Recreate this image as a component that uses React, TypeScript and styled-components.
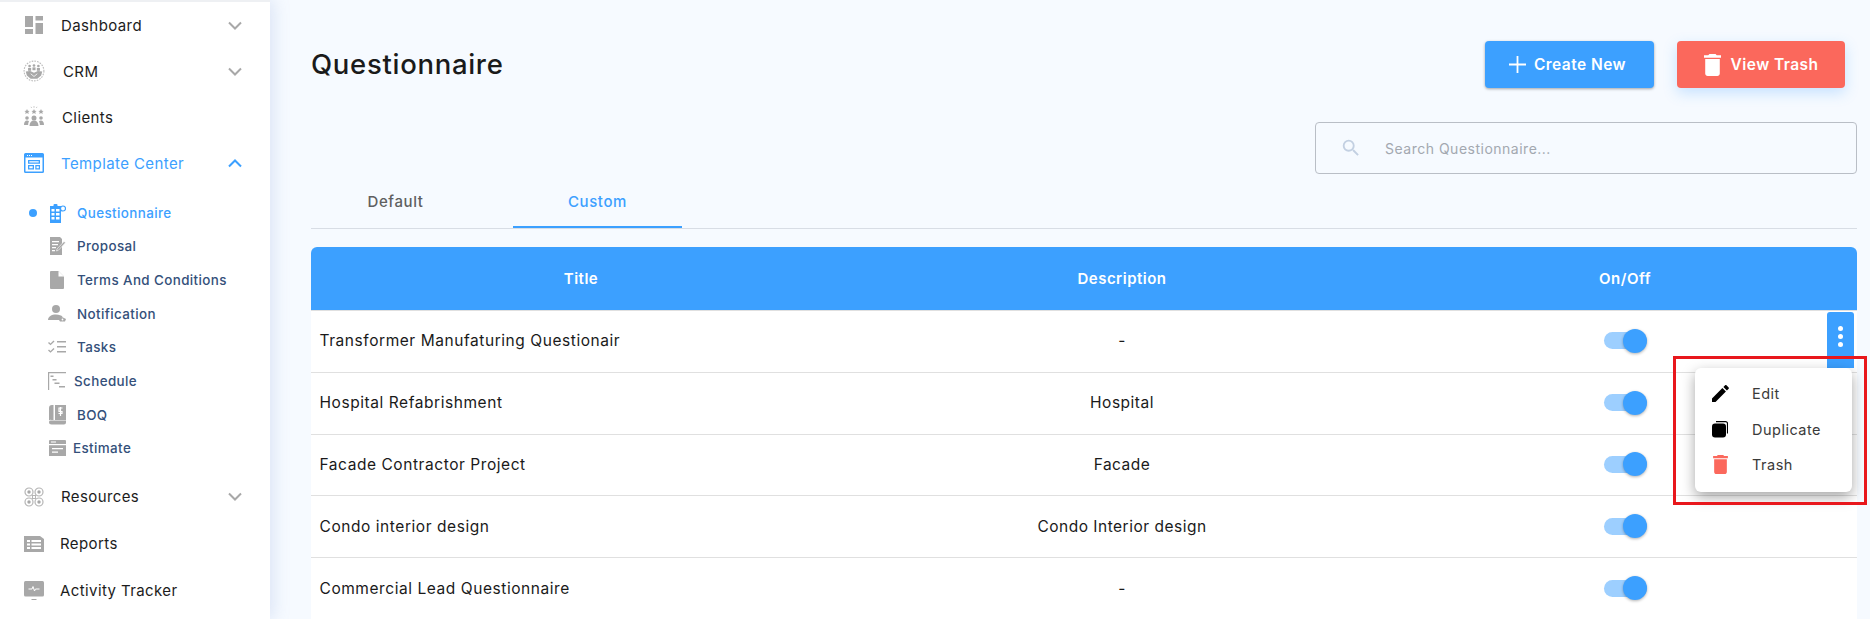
import React, {FC} from 'react'
import styled, {createGlobalStyle} from 'styled-components'

const BLUE = '#3ca0ff'
const RED = '#fb685c'
const GRAY = '#a8a8a8'

const GlobalStyle = createGlobalStyle`
  html, body {
    margin: 0;
    padding: 0;
    height: 619px;
    overflow: hidden;
    background: #f6faff;
    font-family: Inter, "Open Sans", "Liberation Sans", sans-serif;
  }
  * {
    box-sizing: border-box;
  }
`

type IconProps = { color?: string }

const Svg: FC<{ size?: number, w?: number, h?: number, color?: string, vb?: string, children: React.ReactNode }> =
    ({size = 20, w, h, color = GRAY, vb = '0 0 20 20', children}) => (
        <svg width={w || size} height={h || size} viewBox={vb} fill={color} style={{display: 'block', flex: 'none'}}>
            {children}
        </svg>
    )

const DashboardIcon: FC<IconProps> = () => (
    <Svg>
        <rect x="1" y="1" width="8" height="11"/>
        <rect x="11.500" y="1" width="7.500" height="4.500"/>
        <rect x="1" y="14" width="8" height="5"/>
        <rect x="11.500" y="8" width="7.500" height="11"/>
    </Svg>
)

const CrmIcon: FC<IconProps> = () => (
    <Svg w={22} h={22} vb="0 0 20 20">
        <circle cx="10" cy="10" r="9" fill="none" stroke="#bdbdbd" strokeWidth="1" strokeDasharray="1.500 1"/>
        <circle cx="6" cy="5.500" r="1.200"/>
        <circle cx="10" cy="5" r="1.200"/>
        <circle cx="14" cy="5.500" r="1.200"/>
        <rect x="4.600" y="7.200" width="2.800" height="2.600"/>
        <rect x="8.600" y="6.700" width="2.800" height="2.600"/>
        <rect x="12.600" y="7.200" width="2.800" height="2.600"/>
        <path d="M2.500 10.500l4-.5 3.500 1.500 3.500-1.500 4 .5-1 3.500-3.500 3H7l-3.500-3z"/>
        <path d="M7 12.500l3 2.500 3-2.500" fill="none" stroke="#fff" strokeWidth=".7"/>
    </Svg>
)

const ClientsIcon: FC<IconProps> = () => (
    <Svg w={22} h={22} vb="0 0 22 22">
        <path d="M4 3l.8 1.700 1.800.2-1.300 1.200.4 1.800L4 7l-1.700.9.4-1.800L1.400 4.900l1.800-.2zM11 3l.8 1.700 1.800.2-1.300 1.200.4 1.800L11 7l-1.700.9.4-1.800-1.300-1.200 1.800-.2zM18 3l.8 1.700 1.800.2-1.300 1.200.4 1.800L18 7l-1.700.9.4-1.800-1.300-1.200 1.800-.2z"/>
        <path d="M11 0v1.800M8 .8l.7 1.200M14 .8l-.7 1.200" stroke={GRAY} strokeWidth=".6" fill="none"/>
        <circle cx="4" cy="12" r="1.800"/>
        <circle cx="18" cy="12" r="1.800"/>
        <circle cx="11" cy="12" r="2.500"/>
        <path d="M1 19c0-3 1.200-4.500 3-4.500 1 0 1.600.3 2 .8-.6 1-.9 2.200-.9 3.700zM21 19c0-3-1.200-4.500-3-4.500-1 0-1.600.3-2 .8.6 1 .9 2.200.9 3.700zM6.500 20c0-3.500 1.800-5.500 4.500-5.500s4.500 2 4.500 5.500z"/>
    </Svg>
)

const TemplateIcon: FC<IconProps> = () => (
    <Svg color={BLUE}>
        <path d="M1.500 0h17A1.500 1.500 0 0 1 20 1.500V18.500A1.500 1.500 0 0 1 18.500 20h-17A1.500 1.500 0 0 1 0 18.500V1.500A1.500 1.500 0 0 1 1.500 0z"/>
        <rect x="1.500" y="4.500" width="17" height="14" fill="#fff"/>
        <rect x="3" y="2" width="1" height="1" fill="#fff"/>
        <rect x="5" y="2" width="1" height="1" fill="#fff"/>
        <rect x="7" y="2" width="1" height="1" fill="#fff"/>
        <path d="M4 7h12v3.800H4zM5.300 8.200v1.400h9.400V8.200zM4 12h6v4.500H4zM5.300 13.200v2.100h3.400v-2.100zM11.300 12H16v4.500h-4.700zM12.500 13.200v2.100h2.300v-2.100z" fillRule="evenodd"/>
    </Svg>
)

const QuestionnaireIcon: FC<IconProps> = () => (
    <Svg w={17} h={20} vb="0 0 17 20" color={BLUE}>
        <path d="M1 3h11v17H1z"/>
        <rect x="4.500" y="1" width="4" height="3.500" rx="1"/>
        <path d="M2.500 6h3v2.500h-3zM7 6h3.500v2.500H7zM2.500 10h3v2.500h-3zM7 10h3.500v2.500H7zM2.500 14h3v2.500h-3zM7 14h3.500v2.500H7z" fill="#fff"/>
        <circle cx="14" cy="5.500" r="2.500" fill="none" stroke={BLUE} strokeWidth="1.200"/>
    </Svg>
)

const ProposalIcon: FC<IconProps> = () => (
    <Svg w={17} h={18} vb="0 0 17 18">
        <path d="M1 0h10l2 2v16H1z"/>
        <path d="M3 4h7v1.200H3zM3 7h6v1.200H3zM3 10h4v1.200H3zM3 13h3v1.200H3z" fill="#fff"/>
        <path d="M15 4.500l1.500 1.200-7 7.500-2 .8.500-2z" stroke="#fff" strokeWidth=".6"/>
    </Svg>
)

const TermsIcon: FC<IconProps> = () => (
    <Svg w={14} h={18} vb="0 0 14 18">
        <path d="M1 0h7.500L14 5.500V17a1 1 0 0 1-1 1H1a1 1 0 0 1-1-1V1a1 1 0 0 1 1-1z"/>
        <path d="M8.500 0v5.500H14" fill="#fff"/>
    </Svg>
)

const NotificationIcon: FC<IconProps> = () => (
    <Svg w={18} h={18} vb="0 0 18 18">
        <circle cx="8" cy="4" r="4"/>
        <path d="M0 15c0-3.500 3.500-5.500 8-5.500 3 0 5.500 1 6.500 2.200L11 15z"/>
        <path d="M10 13.500l4-1.500 4 2-1 2.500h-5z"/>
        <circle cx="14.500" cy="14.500" r=".9" fill="#fff"/>
    </Svg>
)

const TasksIcon: FC<IconProps> = () => (
    <Svg w={18} h={14} vb="0 0 18 14">
        <path d="M0 3l1-1 1.500 1.500L5.500 0.500l1 1-4 3.800zM0 10.500l1-1L2.500 11l3-3 1 1-4 3.800z"/>
        <path d="M9 1h9v1.400H9zM9 6h9v1.400H9zM9 11h9v1.400H9z"/>
    </Svg>
)

const ScheduleIcon: FC<IconProps> = () => (
    <Svg w={18} h={18} vb="0 0 18 18">
        <path d="M0 0h18v1.200H1.200V18H0z"/>
        <path d="M2.500 3.500h3v1.500h-3zM4.500 7h4v1.500h-4zM6.500 10.500h5v1.500h-5zM11 14h6v1.500h-6z"/>
    </Svg>
)

const BoqIcon: FC<IconProps> = () => (
    <Svg w={17} h={20} vb="0 0 17 20">
        <path d="M3 0h1.500v15H2.500A2.500 2.500 0 0 0 0 15.500V3a3 3 0 0 1 3-3z"/>
        <path d="M6 0h11v15H6z"/>
        <path d="M0 17a1.500 1.500 0 0 1 1.500-1.500H17v2a2 2 0 0 1-2 2H2.500A2.500 2.500 0 0 1 0 17z"/>
        <path d="M13.500 3H10v3.500h3v2H9.500M11.500 2v9" fill="none" stroke="#fff" strokeWidth="1.200"/>
    </Svg>
)

const EstimateIcon: FC<IconProps> = () => (
    <Svg w={17} h={16} vb="0 0 17 16">
        <path d="M1 0h15a1 1 0 0 1 1 1v3H0V1a1 1 0 0 1 1-1z"/>
        <path d="M0 5.200h17V16H0z"/>
        <path d="M3 8h11v1.300H3zM3 11.500h6v1.300H3z" fill="#fff"/>
        <rect x="2" y="1.500" width="5" height="1" fill="#fff"/>
    </Svg>
)

const ResourcesIcon: FC<IconProps> = () => (
    <Svg>
        <circle cx="5" cy="5" r="4" fill="none" stroke="#b5b5b5" strokeWidth="1.200"/>
        <circle cx="15" cy="5" r="4" fill="none" stroke="#b5b5b5" strokeWidth="1.200"/>
        <circle cx="5" cy="15" r="4" fill="none" stroke="#b5b5b5" strokeWidth="1.200"/>
        <circle cx="15" cy="15" r="4" fill="none" stroke="#b5b5b5" strokeWidth="1.200"/>
        <circle cx="5" cy="5" r="1.700"/>
        <circle cx="15" cy="5" r="1.700"/>
        <circle cx="5" cy="15" r="1.700"/>
        <circle cx="15" cy="15" r="1.700"/>
        <rect x="8.500" y="8.500" width="3" height="3" fill="none" stroke="#b5b5b5"/>
    </Svg>
)

const ReportsIcon: FC<IconProps> = () => (
    <Svg w={20} h={16} vb="0 0 20 16">
        <path d="M0 0h16l4 3v13H0z"/>
        <path d="M3 4h3v2H3zM7.500 4H17v2H7.500zM3 7.500h3v2H3zM7.500 7.500H17v2H7.500zM3 11h3v2H3zM7.500 11H17v2H7.500z" fill="#fff"/>
    </Svg>
)

const ActivityIcon: FC<IconProps> = () => (
    <Svg w={20} h={20} vb="0 0 20 20">
        <rect x="0" y="0" width="20" height="15.500" rx="1.500"/>
        <path d="M4.500 8h3.500l1-2.500 1.500 4.500 1-2h4" fill="none" stroke="#fff" strokeWidth="1"/>
        <rect x="7.500" y="18" width="5" height="1"/>
    </Svg>
)

const Chevron: FC<{ up?: boolean, color?: string }> = ({up, color = GRAY}) => (
    <svg width="14" height="9" viewBox="0 0 14 9" fill="none" style={{display: 'block'}}>
        <path d={up ? 'M1 7.500L7 1.500l6 6' : 'M1 1.500l6 6 6-6'} stroke={color} strokeWidth="2"/>
    </svg>
)

const PlusIcon = () => (
    <svg width="17" height="17" viewBox="0 0 17 17" fill="#fff" style={{display: 'block'}}>
        <path d="M7.600 0h1.800v7.600H17v1.800H9.400V17H7.600V9.400H0V7.600h7.600z"/>
    </svg>
)

const TrashIcon: FC<{ color: string, w: number, h: number }> = ({color, w, h}) => (
    <svg width={w} height={h} viewBox="5 3 14 18" fill={color} style={{display: 'block'}}>
        <path d="M6 19c0 1.100.9 2 2 2h8c1.100 0 2-.9 2-2V7H6v12zM19 4h-3.500l-1-1h-5l-1 1H5v2h14V4z"/>
    </svg>
)

const SearchIcon = () => (
    <svg width="22" height="22" viewBox="0 0 24 24" fill="#c3d0e2" style={{display: 'block'}}>
        <path d="M15.500 14h-.79l-.28-.27A6.470 6.470 0 0 0 16 9.500 6.500 6.500 0 1 0 9.500 16c1.610 0 3.090-.59 4.230-1.570l.27.28v.79l5 4.990L20.490 19l-4.990-5zm-6 0C7.010 14 5 11.990 5 9.500S7.010 5 9.500 5 14 7.010 14 9.500 11.990 14 9.500 14z"/>
    </svg>
)

const PencilIcon = () => (
    <svg width="17" height="17" viewBox="3 3 18.100 18" fill="#000" style={{display: 'block'}}>
        <path d="M3 17.250V21h3.750L17.810 9.940l-3.750-3.750L3 17.250zM20.710 7.040c.39-.39.39-1.020 0-1.410l-2.340-2.340c-.39-.39-1.020-.39-1.410 0l-1.830 1.830 3.750 3.750 1.830-1.830z"/>
    </svg>
)

const DuplicateIcon = () => (
    <svg width="16" height="17" viewBox="0 0 16 17" style={{display: 'block'}}>
        <path d="M4 0.600h9.500A2 2 0 0 1 15.500 2.600v10" fill="none" stroke="#000" strokeWidth="1.200"/>
        <rect x="0" y="2.500" width="14" height="14" rx="3" fill="#000"/>
    </svg>
)

const navTop = [
    {label: 'Dashboard', icon: <DashboardIcon/>, chevron: true, textLeft: 61},
    {label: 'CRM', icon: <CrmIcon/>, chevron: true, textLeft: 63},
    {label: 'Clients', icon: <ClientsIcon/>, textLeft: 62},
]

const subItems = [
    {label: 'Questionnaire', icon: <QuestionnaireIcon/>, textLeft: 77, active: true},
    {label: 'Proposal', icon: <ProposalIcon/>, textLeft: 77},
    {label: 'Terms And Conditions', icon: <TermsIcon/>, textLeft: 77},
    {label: 'Notification', icon: <NotificationIcon/>, textLeft: 77},
    {label: 'Tasks', icon: <TasksIcon/>, textLeft: 77},
    {label: 'Schedule', icon: <ScheduleIcon/>, textLeft: 74},
    {label: 'BOQ', icon: <BoqIcon/>, textLeft: 77},
    {label: 'Estimate', icon: <EstimateIcon/>, textLeft: 73},
]

const rows = [
    {title: 'Transformer Manufaturing Questionair', description: '-'},
    {title: 'Hospital Refabrishment', description: 'Hospital'},
    {title: 'Facade Contractor Project', description: 'Facade'},
    {title: 'Condo interior design', description: 'Condo Interior design'},
    {title: 'Commercial Lead Questionnaire', description: '-'},
]

const App: FC = () => {
    return (
        <>
            <GlobalStyle/>
            <Page>
                <Sidebar>
                    {navTop.map(item => (
                        <NavRow key={item.label}>
                            <NavIcon>{item.icon}</NavIcon>
                            <NavLabel $left={item.textLeft}>{item.label}</NavLabel>
                            {item.chevron && <ChevronBox><Chevron/></ChevronBox>}
                        </NavRow>
                    ))}
                    <NavRow>
                        <NavIcon><TemplateIcon/></NavIcon>
                        <NavLabel $left={61} $active>Template Center</NavLabel>
                        <ChevronBox><Chevron up color={BLUE}/></ChevronBox>
                    </NavRow>
                    <SubList>
                        {subItems.map(item => (
                            <SubRow key={item.label}>
                                {item.active && <ActiveDot/>}
                                <SubIcon>{item.icon}</SubIcon>
                                <SubLabel $left={item.textLeft} $active={item.active}>{item.label}</SubLabel>
                            </SubRow>
                        ))}
                    </SubList>
                    <NavRow>
                        <NavIcon><ResourcesIcon/></NavIcon>
                        <NavLabel $left={61}>Resources</NavLabel>
                        <ChevronBox><Chevron/></ChevronBox>
                    </NavRow>
                    <NavRow $height={48}>
                        <NavIcon><ReportsIcon/></NavIcon>
                        <NavLabel $left={60}>Reports</NavLabel>
                    </NavRow>
                    <NavRow>
                        <NavIcon><ActivityIcon/></NavIcon>
                        <NavLabel $left={60}>Activity Tracker</NavLabel>
                    </NavRow>
                </Sidebar>
                <Main>
                    <Header>
                        <Title>Questionnaire</Title>
                        <Actions>
                            <ActionButton $color={BLUE} $width={169} $gap={8} $shift={4} $shadow="0 1px 3px rgba(0,0,0,.35)">
                                <PlusIcon/>Create New
                            </ActionButton>
                            <ActionButton $color={RED} $width={168} $gap={10} $shift={0} $shadow="0 5px 14px rgba(60,160,255,.25)">
                                <TrashIcon color="#fff" w={17} h={22}/>View Trash
                            </ActionButton>
                        </Actions>
                    </Header>
                    <SearchBox>
                        <SearchIcon/>
                        <SearchText>Search Questionnaire...</SearchText>
                    </SearchBox>
                    <Tabs>
                        <Tab>Default</Tab>
                        <Tab $active>Custom</Tab>
                    </Tabs>
                    <Table>
                        <HeadRow>
                            <HeadCell>Title</HeadCell>
                            <HeadCell>Description</HeadCell>
                            <HeadCell>On/Off</HeadCell>
                        </HeadRow>
                        {rows.map(row => (
                            <Row key={row.title}>
                                <TitleCell>{row.title}</TitleCell>
                                <Cell>{row.description}</Cell>
                                <Cell>
                                    <Toggle><Knob/></Toggle>
                                </Cell>
                            </Row>
                        ))}
                        <KebabButton>
                            <KebabDot/><KebabDot/><KebabDot/>
                        </KebabButton>
                        <Menu>
                            <MenuItem><MenuIcon><PencilIcon/></MenuIcon>Edit</MenuItem>
                            <MenuItem><MenuIcon><DuplicateIcon/></MenuIcon>Duplicate</MenuItem>
                            <MenuItem><MenuIcon><TrashIcon color={RED} w={15} h={19}/></MenuIcon>Trash</MenuItem>
                        </Menu>
                        <Highlight/>
                    </Table>
                </Main>
            </Page>
        </>
    )
}
export default App

const Page = styled.div`
  display: flex;
  width: 1870px;
  height: 619px;
  overflow: hidden;
  background: #f6faff;
`

const Sidebar = styled.nav`
  position: relative;
  z-index: 1;
  flex: none;
  width: 270px;
  height: 619px;
  background: #fff;
  border-top: 2px solid #eef0f3;
  box-shadow: 3px 0 16px rgba(120, 150, 210, .22);
`

const NavRow = styled.div<{ $height?: number }>`
  position: relative;
  display: flex;
  align-items: center;
  height: ${p => p.$height || 46}px;
  padding-left: 23px;
`

const NavIcon = styled.span`
  display: flex;
  justify-content: center;
  width: 22px;
`

const NavLabel = styled.span<{ $left: number, $active?: boolean }>`
  margin-left: ${p => p.$left - 45}px;
  font-size: 15px;
  letter-spacing: .4px;
  color: ${p => p.$active ? BLUE : '#1c1c1c'};
  white-space: nowrap;
`

const ChevronBox = styled.span`
  margin-left: auto;
  margin-right: 28px;
`

const SubList = styled.div`
  margin: 9.700px 0 8.500px;
`

const SubRow = styled.div`
  position: relative;
  display: flex;
  align-items: center;
  height: 33.700px;
  padding-left: 47px;
`

const ActiveDot = styled.span`
  position: absolute;
  left: 29px;
  top: 13px;
  width: 8px;
  height: 8px;
  border-radius: 50%;
  background: ${BLUE};
`

const SubIcon = styled.span`
  display: flex;
  justify-content: center;
  width: 20px;
`

const SubLabel = styled.span<{ $left: number, $active?: boolean }>`
  margin-left: ${p => p.$left - 67}px;
  font-size: 13.400px;
  font-weight: 500;
  letter-spacing: .4px;
  color: ${p => p.$active ? BLUE : '#34507a'};
  white-space: nowrap;
`

const Main = styled.main`
  flex: 1;
  min-width: 0;
  padding: 41px 13px 0 41px;
`

const Header = styled.div`
  display: flex;
  align-items: center;
  justify-content: space-between;
  height: 47px;
  padding-right: 12px;
`

const Title = styled.h1`
  margin: 0 0 2px;
  font-size: 27.500px;
  font-weight: 500;
  letter-spacing: .7px;
  color: #1a1a1a;
`

const Actions = styled.div`
  display: flex;
  gap: 23px;
`

const ActionButton = styled.button<{ $color: string, $width: number, $gap: number, $shift: number, $shadow: string }>`
  display: flex;
  align-items: center;
  justify-content: center;
  gap: ${p => p.$gap}px;
  width: ${p => p.$width}px;
  height: 47px;
  padding: 0 ${p => p.$shift}px 0 0;
  border: 0;
  border-radius: 4px;
  background: ${p => p.$color};
  box-shadow: ${p => p.$shadow};
  color: #fff;
  font-family: inherit;
  font-size: 15.500px;
  font-weight: 600;
  letter-spacing: .45px;
`

const SearchBox = styled.div`
  display: flex;
  align-items: center;
  gap: 23px;
  width: 542px;
  height: 52px;
  margin: 34px 0 0 auto;
  padding-left: 24px;
  border: 1px solid #b9bec6;
  border-radius: 4px;
`

const SearchText = styled.span`
  font-size: 14px;
  letter-spacing: .5px;
  color: #a3a8b0;
`

const Tabs = styled.div`
  display: flex;
  gap: 33px;
  height: 55px;
  border-bottom: 1px solid #d8dde5;
`

const Tab = styled.div<{ $active?: boolean }>`
  display: flex;
  align-items: center;
  justify-content: center;
  width: 169px;
  height: 54px;
  padding-top: 2px;
  font-size: 15px;
  font-weight: 500;
  letter-spacing: .6px;
  color: ${p => p.$active ? BLUE : '#5f5f5f'};
  border-bottom: 2px solid ${p => p.$active ? BLUE : 'transparent'};
`

const Table = styled.div`
  position: relative;
  margin-top: 18px;
  background: #fff;
  border-radius: 6px 6px 0 0;
`

const columns = `540px 542px 464px`

const HeadRow = styled.div`
  display: grid;
  grid-template-columns: ${columns};
  align-items: center;
  height: 64px;
  background: ${BLUE};
  border-bottom: 1px solid #e0e0e0;
  border-radius: 6px 6px 0 0;
`

const HeadCell = styled.div`
  text-align: center;
  font-size: 15px;
  font-weight: 600;
  letter-spacing: .5px;
  color: #fff;
`

const Row = styled.div`
  display: grid;
  grid-template-columns: ${columns};
  align-items: center;
  height: 61.800px;
  padding-bottom: 1px;
  border-bottom: 1px solid #e0e0e0;
`

const Cell = styled.div`
  display: flex;
  justify-content: center;
  font-size: 15.500px;
  letter-spacing: .5px;
  color: #1a1a1a;
`

const TitleCell = styled(Cell)`
  justify-content: flex-start;
  padding-left: 8.500px;
  letter-spacing: .56px;
`

const Toggle = styled.div`
  position: relative;
  width: 43px;
  height: 17px;
  border-radius: 9px;
  background: #9dcfff;
`

const Knob = styled.span`
  position: absolute;
  right: 0;
  top: -3.500px;
  width: 24px;
  height: 24px;
  border-radius: 50%;
  background: ${BLUE};
  box-shadow: 0 1px 3px rgba(0, 0, 0, .3);
`

const KebabButton = styled.div`
  position: absolute;
  left: 1516px;
  top: 65px;
  display: flex;
  flex-direction: column;
  align-items: center;
  justify-content: center;
  gap: 3px;
  width: 27px;
  height: 56px;
  padding-bottom: 8px;
  border-radius: 3px 3px 0 0;
  background: ${BLUE};
`

const KebabDot = styled.span`
  width: 5px;
  height: 5px;
  border-radius: 50%;
  background: #fff;
`

const Menu = styled.div`
  position: absolute;
  left: 1384px;
  top: 121px;
  width: 157px;
  height: 124px;
  padding-top: 8px;
  border-radius: 6px;
  background: #fff;
  box-shadow: 0 5px 14px rgba(0, 0, 0, .35);
`

const MenuItem = styled.div`
  display: flex;
  align-items: center;
  height: 35.500px;
  font-size: 14.500px;
  letter-spacing: .5px;
  color: #3a3a3a;
`

const MenuIcon = styled.span`
  display: flex;
  justify-content: center;
  width: 57px;
  padding-right: 7px;
`

const Highlight = styled.div`
  position: absolute;
  left: 1362px;
  top: 109px;
  width: 194px;
  height: 149px;
  border: 3px solid #e8171c;
  pointer-events: none;
`
